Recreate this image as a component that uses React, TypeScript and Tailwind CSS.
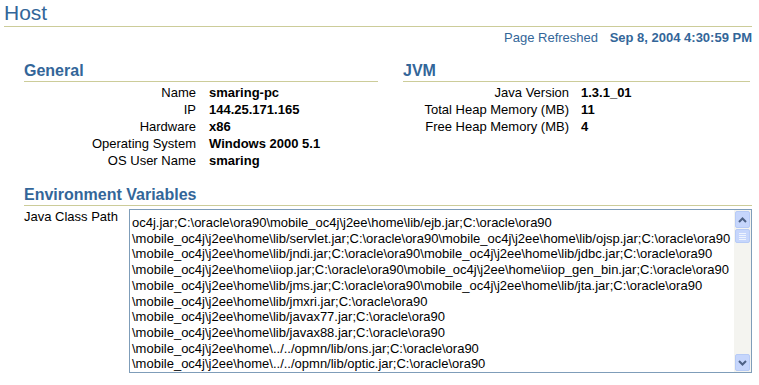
import React from 'react';

const general = [
  { label: 'Name', value: 'smaring-pc' },
  { label: 'IP', value: '144.25.171.165' },
  { label: 'Hardware', value: 'x86' },
  { label: 'Operating System', value: 'Windows 2000 5.1' },
  { label: 'OS User Name', value: 'smaring' },
];

const jvm = [
  { label: 'Java Version', value: '1.3.1_01' },
  { label: 'Total Heap Memory (MB)', value: '11' },
  { label: 'Free Heap Memory (MB)', value: '4' },
];

const classPath = [
  'oc4j.jar;C:\\oracle\\ora90\\mobile_oc4j\\j2ee\\home\\lib/ejb.jar;C:\\oracle\\ora90',
  '\\mobile_oc4j\\j2ee\\home\\lib/servlet.jar;C:\\oracle\\ora90\\mobile_oc4j\\j2ee\\home\\lib/ojsp.jar;C:\\oracle\\ora90',
  '\\mobile_oc4j\\j2ee\\home\\lib/jndi.jar;C:\\oracle\\ora90\\mobile_oc4j\\j2ee\\home\\lib/jdbc.jar;C:\\oracle\\ora90',
  '\\mobile_oc4j\\j2ee\\home\\iiop.jar;C:\\oracle\\ora90\\mobile_oc4j\\j2ee\\home\\iiop_gen_bin.jar;C:\\oracle\\ora90',
  '\\mobile_oc4j\\j2ee\\home\\lib/jms.jar;C:\\oracle\\ora90\\mobile_oc4j\\j2ee\\home\\lib/jta.jar;C:\\oracle\\ora90',
  '\\mobile_oc4j\\j2ee\\home\\lib/jmxri.jar;C:\\oracle\\ora90',
  '\\mobile_oc4j\\j2ee\\home\\lib/javax77.jar;C:\\oracle\\ora90',
  '\\mobile_oc4j\\j2ee\\home\\lib/javax88.jar;C:\\oracle\\ora90',
  '\\mobile_oc4j\\j2ee\\home\\../../opmn/lib/ons.jar;C:\\oracle\\ora90',
  '\\mobile_oc4j\\j2ee\\home\\../../opmn/lib/optic.jar;C:\\oracle\\ora90',
];

const SectionHead = ({ title }: { title: string }) => (
  <div className="h-[22px] leading-[21px] border-b border-[#cccc99] text-[16px] font-bold text-[#336699]">
    {title}
  </div>
);

const Arrow = ({ up }: { up?: boolean }) => (
  <svg width="9" height="6" viewBox="0 0 9 6">
    <path
      d={up ? 'M1 5 L4.5 1.5 L8 5' : 'M1 1 L4.5 4.5 L8 1'}
      fill="none"
      stroke="#4d6185"
      strokeWidth="2"
    />
  </svg>
);

export default function App() {
  return (
    <div className="w-[759px] h-[385px] bg-white pl-[4px] pr-[7px] font-['Liberation_Sans',Arial,sans-serif] text-[13px] text-black overflow-hidden">
      {/* Page title */}
      <div className="h-[27px] leading-[26px] border-b border-[#cccc99] text-[21px] text-[#336699]">Host</div>
      <div className="h-[21px] leading-[21px] text-right text-[#336699]">
        Page Refreshed <span className="ml-[8px] font-bold">Sep 8, 2004 4:30:59 PM</span>
      </div>

      <div className="pl-[20px]">
        <div className="flex mt-[12px]">
          {/* General */}
          <div className="w-[354px]">
            <SectionHead title="General" />
            <div className="pt-[2px]">
              {general.map((r) => (
                <div key={r.label} className="flex h-[17px] leading-[17px]">
                  <div className="w-[172px] text-right">{r.label}</div>
                  <div className="ml-[13px] font-bold">{r.value}</div>
                </div>
              ))}
            </div>
          </div>
          {/* JVM */}
          <div className="ml-[25px] flex-1 mr-[2px]">
            <SectionHead title="JVM" />
            <div className="pt-[2px]">
              {jvm.map((r) => (
                <div key={r.label} className="flex h-[17px] leading-[17px]">
                  <div className="w-[166px] text-right">{r.label}</div>
                  <div className="ml-[12px] font-bold">{r.value}</div>
                </div>
              ))}
            </div>
          </div>
        </div>

        {/* Environment Variables */}
        <div className="mt-[15px]">
          <SectionHead title="Environment Variables" />
          <div className="flex mt-[3px]">
            <div className="w-[105px] leading-[15px]">Java Class Path</div>
            <div className="flex-1 h-[164px] border border-[#7f9db9] flex overflow-hidden">
              <div className="flex-1 pl-[2px] pt-[5px] overflow-hidden">
                {classPath.map((l, i) => (
                  <div key={i} className="whitespace-nowrap leading-[15.7px]">{l}</div>
                ))}
              </div>
              {/* scrollbar */}
              <div className="w-[17px] bg-[#f4f4f0] flex flex-col">
                <div className="h-[17px] m-[1px] mb-0 rounded-[2px] border border-[#b7cbf6] bg-[#c6d6fc] flex items-center justify-center">
                  <Arrow up />
                </div>
                <div className="h-[14px] mx-[1px] mt-[1px] rounded-[2px] border border-[#b7cbf6] bg-[#c6d6fc] flex flex-col items-center justify-center gap-[1px]">
                  <div className="w-[7px] h-px bg-[#eef4fe]" />
                  <div className="w-[7px] h-px bg-[#eef4fe]" />
                  <div className="w-[7px] h-px bg-[#eef4fe]" />
                  <div className="w-[7px] h-px bg-[#eef4fe]" />
                </div>
                <div className="flex-1" />
                <div className="h-[17px] m-[1px] mt-0 rounded-[2px] border border-[#b7cbf6] bg-[#c6d6fc] flex items-center justify-center">
                  <Arrow />
                </div>
              </div>
            </div>
          </div>
        </div>
      </div>
    </div>
  );
}
